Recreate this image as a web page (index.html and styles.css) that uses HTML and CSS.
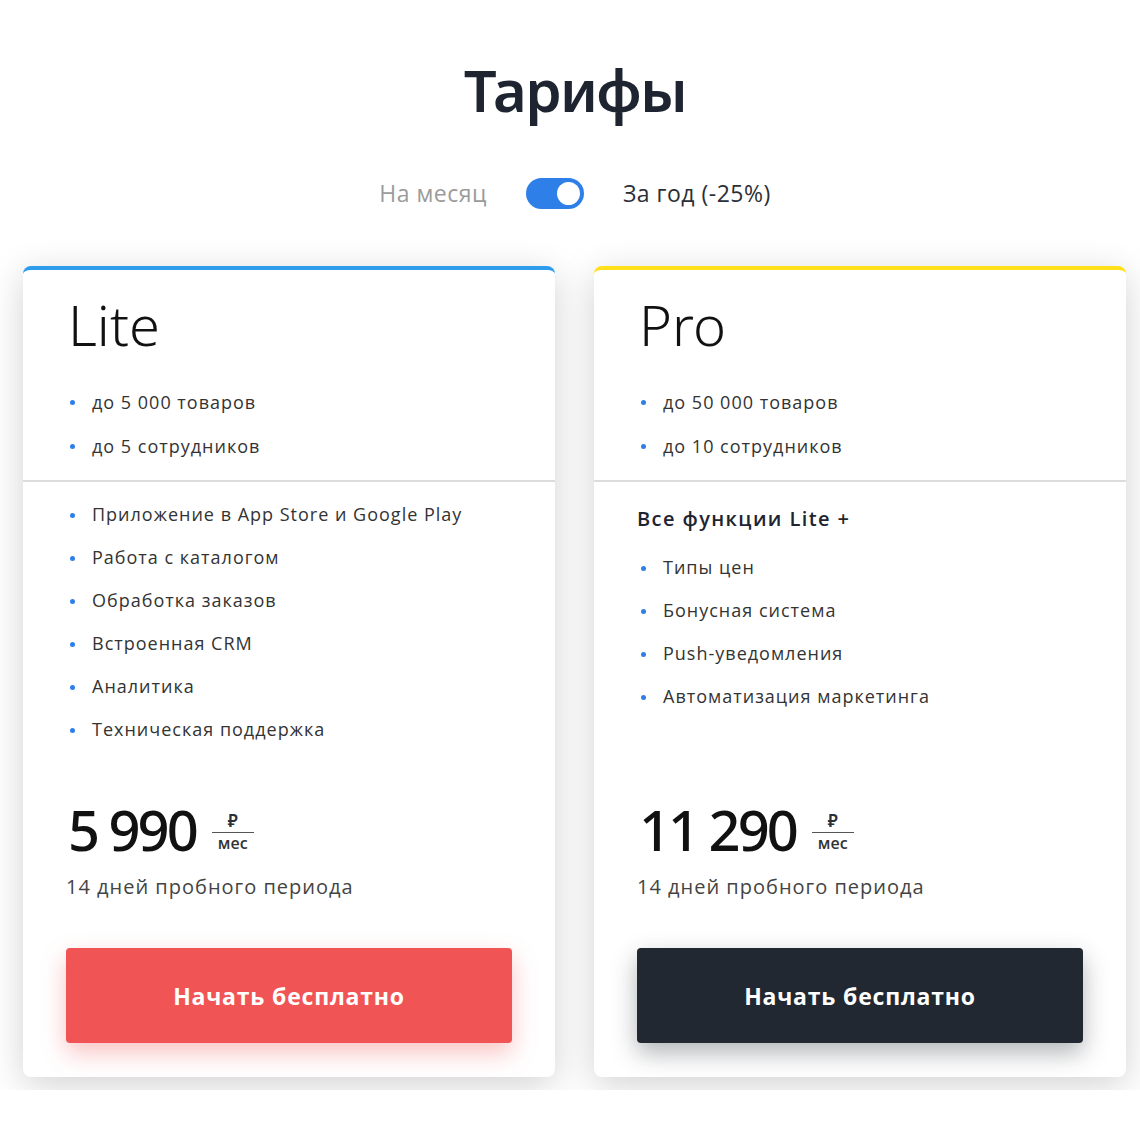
FILE: index.html
```
<!DOCTYPE html>
<html lang="ru">
<head>
    <meta charset="UTF-8">
    <meta name="viewport" content="width=device-width, initial-scale=1.0">
    <title>Тарифы</title>
    <link rel="stylesheet" href="styles.css">
</head>
<body>
    <div class="page">
        <h1 class="title">Тарифы</h1>

        <div class="period">
            <span class="period-label">На месяц</span>
            <span class="switch"><span class="knob"></span></span>
            <span class="period-label active">За год (-25%)</span>
        </div>

        <div class="plans">
            <div class="plan plan-lite">
                <div class="plan-head">
                    <h2 class="plan-name">Lite</h2>
                    <ul class="features">
                        <li>до 5 000 товаров</li>
                        <li>до 5 сотрудников</li>
                    </ul>
                </div>
                <div class="plan-body">
                    <ul class="features">
                        <li>Приложение в App Store и Google Play</li>
                        <li>Работа с каталогом</li>
                        <li>Обработка заказов</li>
                        <li>Встроенная CRM</li>
                        <li>Аналитика</li>
                        <li>Техническая поддержка</li>
                    </ul>
                    <div class="price">
                        <span class="amount">5 990</span>
                        <span class="unit"><span class="cur">₽</span><span class="per">мес</span></span>
                    </div>
                    <p class="trial">14 дней пробного периода</p>
                    <a class="btn btn-red" href="#">Начать бесплатно</a>
                </div>
            </div>

            <div class="plan plan-pro">
                <div class="plan-head">
                    <h2 class="plan-name">Pro</h2>
                    <ul class="features">
                        <li>до 50 000 товаров</li>
                        <li>до 10 сотрудников</li>
                    </ul>
                </div>
                <div class="plan-body">
                    <p class="includes">Все функции Lite +</p>
                    <ul class="features">
                        <li>Типы цен</li>
                        <li>Бонусная система</li>
                        <li>Push-уведомления</li>
                        <li>Автоматизация маркетинга</li>
                    </ul>
                    <div class="price">
                        <span class="amount">11 290</span>
                        <span class="unit"><span class="cur">₽</span><span class="per">мес</span></span>
                    </div>
                    <p class="trial">14 дней пробного периода</p>
                    <a class="btn btn-dark" href="#">Начать бесплатно</a>
                </div>
            </div>
        </div>
    </div>
</body>
</html>
```

FILE: styles.css
```
body {
    margin: 0;
    background: #fff;
    font-family: 'Open Sans', 'Noto Sans', sans-serif;
    color: #2b2f36;
}
.page {
    height: 1090px;
    overflow: hidden;
}
.title {
    margin: 0;
    padding: 48px 0 0 10px;
    text-align: center;
    font-family: 'Noto Sans', sans-serif;
    font-size: 58px;
    font-weight: 600;
    letter-spacing: -1.5px;
    line-height: 84px;
    color: #1e2430;
}
.period {
    display: flex;
    justify-content: center;
    align-items: center;
    gap: 39px;
    margin-top: 46px;
    padding-left: 10px;
}
.period-label {
    font-size: 23px;
    letter-spacing: 0.5px;
    line-height: 31px;
    color: #9b9b9b;
}
.period-label.active {
    color: #2b2f36;
}
.switch {
    position: relative;
    width: 58px;
    height: 31px;
    border-radius: 16px;
    background: #2f7fe8;
}
.knob {
    position: absolute;
    top: 4px;
    right: 4px;
    width: 23px;
    height: 23px;
    border-radius: 50%;
    background: #fff;
}
.plans {
    display: grid;
    grid-template-columns: 532px 532px;
    gap: 39px;
    margin-top: 57px;
    padding-left: 23px;
}
.plan {
    display: flex;
    flex-direction: column;
    height: 807px;
    background: #fff;
    border-top: 4px solid #2d9cec;
    border-radius: 8px;
    box-shadow: 0 8px 36px rgba(0, 0, 0, 0.18);
}
.plan-pro {
    border-top-color: #ffe01b;
}
.plan-head {
    padding: 16px 43px 12px 45px;
    border-bottom: 2px solid #dcdcdc;
}
.plan-name {
    margin: 0 0 18px;
    font-family: 'Noto Sans', sans-serif;
    font-size: 56px;
    font-weight: 300;
    line-height: 76px;
    color: #111;
}
.features {
    list-style: none;
    margin: 0;
    padding: 0;
}
.features li {
    position: relative;
    padding-left: 24px;
    font-size: 18px;
    letter-spacing: 1px;
    line-height: 44px;
    color: #333;
}
.features li::before {
    content: "";
    position: absolute;
    left: 2px;
    top: 20px;
    width: 5px;
    height: 5px;
    border-radius: 50%;
    background: #2f7fe8;
}
.plan-body {
    flex: 1;
    display: flex;
    flex-direction: column;
    padding: 11px 43px 34px 45px;
}
.plan-body .features li {
    line-height: 43px;
}
.includes {
    margin: 12px 0 14px -2px;
    font-size: 20px;
    font-weight: 600;
    letter-spacing: 1.4px;
    color: #1e2430;
}
.price {
    display: flex;
    align-items: center;
    gap: 16px;
    margin-top: auto;
}
.amount {
    font-family: 'Noto Sans', sans-serif;
    font-size: 56px;
    font-weight: 500;
    letter-spacing: -3px;
    line-height: 60px;
    color: #111;
}
.unit {
    display: flex;
    flex-direction: column;
    align-items: center;
    width: 42px;
    margin-top: 4px;
}
.cur {
    width: 100%;
    border-bottom: 1px solid #555;
    font-size: 17px;
    font-weight: 600;
    line-height: 22px;
    text-align: center;
}
.per {
    font-size: 16px;
    font-weight: 600;
    line-height: 20px;
    color: #333;
}
.trial {
    margin: 14px 0 48px -2px;
    font-size: 20px;
    letter-spacing: 1px;
    color: #444;
}
.btn {
    display: flex;
    align-items: center;
    justify-content: center;
    height: 95px;
    margin-left: -2px;
    border-radius: 4px;
    font-size: 23px;
    font-weight: 700;
    letter-spacing: 0.8px;
    color: #fff;
    text-decoration: none;
}
.btn-red {
    background: #f05454;
    box-shadow: 0 10px 24px rgba(240, 84, 84, 0.35);
}
.btn-dark {
    background: #222831;
    box-shadow: 0 10px 24px rgba(34, 40, 49, 0.35);
}
```
